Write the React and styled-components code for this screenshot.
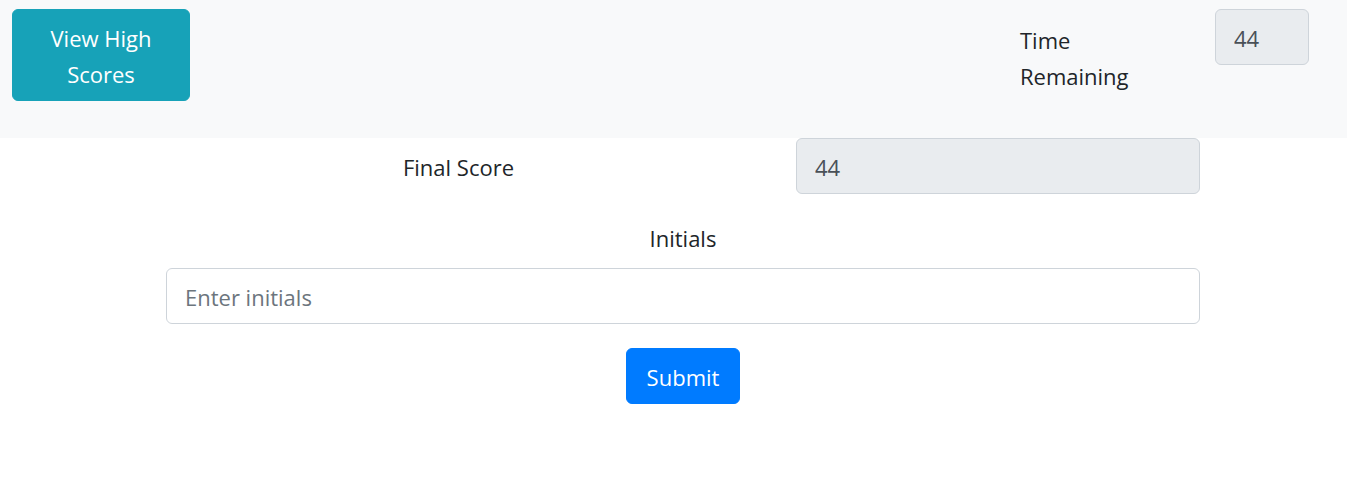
import React from 'react';
import styled, { createGlobalStyle } from 'styled-components';

const GlobalStyle = createGlobalStyle`
	body {
		margin: 0;
		background: #fff;
		color: #212529;
		font-family: 'Open Sans', 'Noto Sans', sans-serif;
		font-size: 22px;
		line-height: 36px;
	}
	* {
		box-sizing: border-box;
	}
`;

export default function App() {
	return (
		<>
			<GlobalStyle />
			<Header>
				<Button color='#17a2b8' width='178px'>
					View High Scores
				</Button>
				<Timer>
					<TimerLabel>Time Remaining</TimerLabel>
					<Field readOnly value='44' width='94px' />
				</Timer>
			</Header>
			<Main>
				<ScoreRow>
					<ScoreLabel>Final Score</ScoreLabel>
					<Field readOnly value='44' width='404px' />
				</ScoreRow>
				<Group>
					<Label htmlFor='initials'>Initials</Label>
					<Field id='initials' type='text' placeholder='Enter initials' />
				</Group>
				<Button color='#007bff'>Submit</Button>
			</Main>
		</>
	);
}

const Header = styled.header`
	display: flex;
	align-items: flex-start;
	height: 138px;
	padding: 9px 38px 0 12px;
	background: #f8f9fa;
`;

const Button = styled.button`
	width: ${(p) => p.width || 'auto'};
	padding: 10px 20px 8px;
	border: 1px solid ${(p) => p.color};
	border-radius: 6px;
	background: ${(p) => p.color};
	color: #fff;
	font-family: inherit;
	font-size: 22px;
	line-height: 36px;
	text-align: center;
	cursor: pointer;
`;

const Timer = styled.div`
	display: flex;
	align-items: flex-start;
	margin-left: auto;
`;

const TimerLabel = styled.div`
	width: 195px;
	padding: 13px 60px 0 0;
`;

const Field = styled.input`
	width: ${(p) => p.width || '100%'};
	height: 56px;
	padding: 10px 18px 8px;
	border: 1.5px solid #ced4da;
	border-radius: 6px;
	background: ${(p) => (p.readOnly ? '#e9ecef' : '#fff')};
	color: #495057;
	font-family: inherit;
	font-size: 22px;
	line-height: 36px;
	outline: none;

	&::placeholder {
		color: #6c757d;
	}
`;

const Main = styled.main`
	width: 1034px;
	margin-left: 166px;
	display: flex;
	flex-direction: column;
	align-items: center;
`;

const ScoreRow = styled.div`
	display: grid;
	grid-template-columns: 630px 404px;
	align-items: center;
	width: 100%;
	margin-bottom: 26px;
`;

const ScoreLabel = styled.label`
	text-align: center;
	padding: 2px 45px 0 0;
`;

const Group = styled.div`
	display: flex;
	flex-direction: column;
	align-items: center;
	gap: 12px;
	width: 100%;
	margin-bottom: 24px;
`;

const Label = styled.label`
	display: block;
`;
